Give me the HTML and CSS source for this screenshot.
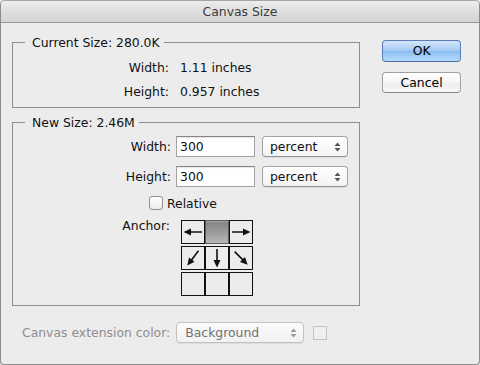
FILE: index.html
```html
<!DOCTYPE html>
<html>
<head>
<meta charset="utf-8">
<link rel="stylesheet" href="styles.css">
</head>
<body>
<div class="window">
  <div class="titlebar">Canvas Size</div>
  <div class="content">
    <div class="main">
      <fieldset class="group">
        <legend>Current Size: 280.0K</legend>
        <div class="info-grid">
          <span class="lbl">Width:</span><span>1.11 inches</span>
          <span class="lbl">Height:</span><span>0.957 inches</span>
        </div>
      </fieldset>
      <fieldset class="group new-size">
        <legend>New Size: 2.46M</legend>
        <div class="field-row">
          <span class="lbl">Width:</span>
          <div class="textbox">300</div>
          <div class="popup"><span>percent</span><svg class="updown" width="7" height="10" viewBox="0 0 7 10"><path d="M3.5 0.5 L6.5 4 L0.5 4 Z M3.5 9.5 L6.5 6 L0.5 6 Z"/></svg></div>
        </div>
        <div class="field-row">
          <span class="lbl">Height:</span>
          <div class="textbox">300</div>
          <div class="popup"><span>percent</span><svg class="updown" width="7" height="10" viewBox="0 0 7 10"><path d="M3.5 0.5 L6.5 4 L0.5 4 Z M3.5 9.5 L6.5 6 L0.5 6 Z"/></svg></div>
        </div>
        <div class="check-row">
          <span class="checkbox"></span><span>Relative</span>
        </div>
        <div class="anchor-row">
          <span class="lbl anchor-lbl">Anchor:</span>
          <div class="anchor-grid">
            <div class="cell"><svg width="22" height="22" viewBox="0 0 22 22"><g transform="translate(11 11) rotate(180)"><line x1="-9" y1="0" x2="3" y2="0"/><path d="M9.5 0 L2 -3.5 L2 3.5 Z"/></g></svg></div>
            <div class="cell selected"></div>
            <div class="cell"><svg width="22" height="22" viewBox="0 0 22 22"><g transform="translate(11 11)"><line x1="-9" y1="0" x2="3" y2="0"/><path d="M9.5 0 L2 -3.5 L2 3.5 Z"/></g></svg></div>
            <div class="cell"><svg width="22" height="22" viewBox="0 0 22 22"><g transform="translate(11 11) rotate(127)"><line x1="-9" y1="0" x2="3" y2="0"/><path d="M9.5 0 L2 -3.5 L2 3.5 Z"/></g></svg></div>
            <div class="cell"><svg width="22" height="22" viewBox="0 0 22 22"><g transform="translate(11 11) rotate(90)"><line x1="-9" y1="0" x2="3" y2="0"/><path d="M9.5 0 L2 -3.5 L2 3.5 Z"/></g></svg></div>
            <div class="cell"><svg width="22" height="22" viewBox="0 0 22 22"><g transform="translate(11 11) rotate(45)"><line x1="-9" y1="0" x2="3" y2="0"/><path d="M9.5 0 L2 -3.5 L2 3.5 Z"/></g></svg></div>
            <div class="cell"></div>
            <div class="cell"></div>
            <div class="cell"></div>
          </div>
        </div>
      </fieldset>
      <div class="ext-row">
        <span class="ext-lbl">Canvas extension color:</span>
        <div class="popup disabled"><span>Background</span><svg class="updown" width="7" height="10" viewBox="0 0 7 10"><path d="M3.5 0.5 L6.5 4 L0.5 4 Z M3.5 9.5 L6.5 6 L0.5 6 Z"/></svg></div>
        <span class="swatch"></span>
      </div>
    </div>
    <div class="buttons">
      <div class="btn ok">OK</div>
      <div class="btn cancel">Cancel</div>
    </div>
  </div>
</div>
</body>
</html>
```
FILE: styles.css
```css
html, body {
  margin: 0;
  padding: 0;
  background: #e4e4e4;
}
body {
  font-family: "DejaVu Sans", "Liberation Sans", sans-serif;
  font-size: 12.4px;
  color: #111;
}
.window {
  width: 480px;
  height: 365px;
  box-sizing: border-box;
  border: 1px solid #8c8c8c;
  border-top-color: #a6a6a6;
  border-radius: 5px 5px 4px 4px;
  background: #ececec;
  overflow: hidden;
}
.titlebar {
  height: 21px;
  line-height: 22px;
  text-align: center;
  color: #3a3a3a;
  background: linear-gradient(#ececec, #d3d3d3);
  border-bottom: 1px solid #9a9a9a;
}
.content {
  display: flex;
  padding: 12px 18px 0 11px;
}
.main {
  width: 349px;
}
.group {
  margin: 0;
  padding: 0;
  border: 1px solid #8f8f8f;
  min-width: 0;
}
.group legend {
  margin-left: 12px;
  padding: 0 4px 0 7px;
  line-height: 15px;
}
.info-grid {
  display: grid;
  grid-template-columns: 156px auto;
  column-gap: 11px;
  grid-auto-rows: 24px;
  align-items: center;
  padding: 5px 0 4px;
}
.lbl {
  text-align: right;
}
.new-size {
  margin-top: 7px;
  padding: 6px 0 9px;
}
.field-row {
  display: flex;
  align-items: center;
  height: 21px;
  margin-bottom: 9px;
}
.field-row .lbl {
  width: 158px;
  margin-right: 5px;
}
.textbox {
  box-sizing: border-box;
  width: 79px;
  height: 21px;
  line-height: 19px;
  padding-left: 3px;
  background: #fff;
  border: 1px solid #a2a2a2;
  border-top-color: #858585;
  box-shadow: inset 0 1px 1px rgba(0, 0, 0, 0.1);
}
.popup {
  box-sizing: border-box;
  width: 86px;
  height: 21px;
  margin-left: 7px;
  padding: 0 6px 0 7px;
  display: flex;
  align-items: center;
  justify-content: space-between;
  border: 1px solid #a4a4a4;
  border-bottom-color: #929292;
  border-radius: 4px;
  background: linear-gradient(#ffffff, #f3f3f3);
  box-shadow: 0 1px 0 rgba(0, 0, 0, 0.06);
}
.updown path {
  fill: #555;
}
.check-row {
  display: flex;
  align-items: center;
  height: 14px;
  padding-left: 136px;
  margin-bottom: 10px;
}
.checkbox {
  box-sizing: border-box;
  width: 14px;
  height: 14px;
  margin-right: 4px;
  border: 1px solid #8e8e8e;
  border-radius: 3px;
  background: linear-gradient(#ffffff, #ececec);
}
.anchor-row {
  display: flex;
  align-items: flex-start;
}
.anchor-lbl {
  width: 157px;
  margin-right: 11px;
  line-height: 12px;
}
.anchor-grid {
  display: grid;
  grid-template-columns: repeat(3, 24px);
  grid-template-rows: repeat(3, 24px);
  row-gap: 2px;
}
.cell {
  box-sizing: border-box;
  border: 1px solid #111;
  background: #ececec;
}
.cell svg {
  display: block;
}
.cell line {
  stroke: #111;
  stroke-width: 1.6;
}
.cell path {
  fill: #111;
}
.cell.selected {
  border-color: #5c5c5c;
  background: linear-gradient(#a6a6a6 0, #868686 2px, #9a9a9a 50%, #b8b8b8 100%);
}
.ext-row {
  display: flex;
  align-items: center;
  height: 21px;
  margin-top: 16px;
  padding-left: 10px;
}
.ext-lbl {
  color: #8e8e8e;
}
.popup.disabled {
  width: 128px;
  margin-left: 6px;
  padding-left: 8px;
  color: #707070;
  border-color: #c2c2c2;
  background: linear-gradient(#fbfbfb, #f2f2f2);
}
.popup.disabled .updown path {
  fill: #9a9a9a;
}
.swatch {
  box-sizing: border-box;
  width: 14px;
  height: 14px;
  margin-left: 9px;
  border: 1px solid #c4c4c4;
  background: #efefef;
}
.buttons {
  width: 79px;
  margin-left: 22px;
  padding-top: 5px;
  display: flex;
  flex-direction: column;
  gap: 10px;
}
.btn {
  box-sizing: border-box;
  height: 21px;
  line-height: 19px;
  text-align: center;
  border-radius: 4px;
  color: #000;
}
.btn.ok {
  height: 22px;
  line-height: 20px;
  border: 1px solid #5a7cb8;
  border-bottom-color: #4a6aa3;
  background: linear-gradient(#d3e6fa 0%, #a9cdf4 45%, #8cbdf0 52%, #b4dcfc 100%);
}
.btn.cancel {
  border: 1px solid #a0a0a0;
  border-bottom-color: #858585;
  background: linear-gradient(#ffffff 0%, #f5f5f5 50%, #ececec 52%, #f7f7f7 100%);
}
```
